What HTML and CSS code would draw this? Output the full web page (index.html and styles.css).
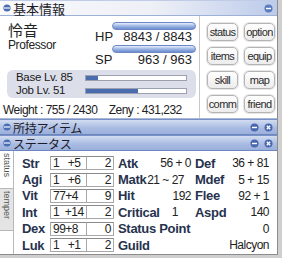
FILE: index.html
```html
<!DOCTYPE html>
<html>

<head>
    <link rel="stylesheet" href="styles.css">
</head>

<body>
    <div class="win">
        <div class="title title-light">
            <svg class="ball" width="8" height="8" viewBox="0 0 8 8"><circle cx="4" cy="4" r="3.6" fill="#4a6cb0"/><rect x="1" y="3.2" width="6" height="1.6" fill="#c8d6f0"/></svg>
            <span class="title-text">基本情報</span>
            <svg class="ctrl" width="9" height="9" viewBox="0 0 9 9"><circle cx="4.5" cy="4.5" r="4" fill="#5a7cc0"/><rect x="2" y="3.8" width="5" height="1.4" fill="#fff"/></svg>
        </div>
        <div class="basic">
            <div class="basic-left">
                <div class="char">
                    <div class="names">
                        <div class="char-name">怜音</div>
                        <div class="char-job">Professor</div>
                    </div>
                    <div class="gauges">
                        <div class="gauge"></div>
                        <div class="gauge-row"><span>HP</span><span>8843 / 8843</span></div>
                        <div class="gauge"></div>
                        <div class="gauge-row"><span>SP</span><span>963 / 963</span></div>
                    </div>
                </div>
                <div class="lv-box">
                    <div class="lv-row"><span class="lv-label">Base Lv. 85</span><div class="exp"><div class="exp-fill" style="width: 12%"></div></div></div>
                    <div class="lv-row"><span class="lv-label">Job Lv. 51</span><div class="exp"><div class="exp-fill" style="width: 52%"></div></div></div>
                </div>
                <div class="weight">Weight : 755 / 2430&nbsp;&nbsp;&nbsp; Zeny : 431,232</div>
            </div>
            <div class="menu">
                <div class="btn">status</div>
                <div class="btn">option</div>
                <div class="btn">items</div>
                <div class="btn">equip</div>
                <div class="btn">skill</div>
                <div class="btn">map</div>
                <div class="btn">comm</div>
                <div class="btn">friend</div>
            </div>
        </div>
        <div class="title title-dark">
            <svg class="ball" width="8" height="8" viewBox="0 0 8 8"><circle cx="4" cy="4" r="3.6" fill="#4a6cb0"/><rect x="1" y="3.2" width="6" height="1.6" fill="#c8d6f0"/></svg>
            <span class="title-text">所持アイテム</span>
            <svg class="ctrl" width="9" height="9" viewBox="0 0 9 9"><circle cx="4.5" cy="4.5" r="4" fill="#4a68b0"/><rect x="2" y="3.8" width="5" height="1.4" fill="#fff"/></svg>
            <svg class="ctrl" width="9" height="9" viewBox="0 0 9 9"><circle cx="4.5" cy="4.5" r="4" fill="#4a68b0"/><path d="M2.8 2.8 L6.2 6.2 M6.2 2.8 L2.8 6.2" stroke="#fff" stroke-width="1.3"/></svg>
        </div>
        <div class="title title-dark">
            <svg class="ball" width="8" height="8" viewBox="0 0 8 8"><circle cx="4" cy="4" r="3.6" fill="#4a6cb0"/><rect x="1" y="3.2" width="6" height="1.6" fill="#c8d6f0"/></svg>
            <span class="title-text">ステータス</span>
            <svg class="ctrl" width="9" height="9" viewBox="0 0 9 9"><circle cx="4.5" cy="4.5" r="4" fill="#4a68b0"/><rect x="2" y="3.8" width="5" height="1.4" fill="#fff"/></svg>
            <svg class="ctrl" width="9" height="9" viewBox="0 0 9 9"><circle cx="4.5" cy="4.5" r="4" fill="#4a68b0"/><path d="M2.8 2.8 L6.2 6.2 M6.2 2.8 L2.8 6.2" stroke="#fff" stroke-width="1.3"/></svg>
        </div>
        <div class="status">
            <div class="tabs">
                <div class="tab tab-on">status</div>
                <div class="tab">temper</div>
            </div>
            <div class="stats">
                <div class="stat-row">
                    <span class="k">Str</span><span class="box box-val">1   +5</span><span class="box box-cost">2</span>
                    <div class="pair"><span class="k">Atk</span><span class="v">56 + 0</span></div>
                    <div class="pair pair-r"><span class="k">Def</span><span class="v">36 + 81</span></div>
                </div>
                <div class="stat-row">
                    <span class="k">Agi</span><span class="box box-val">1   +6</span><span class="box box-cost">2</span>
                    <div class="pair"><span class="k">Matk</span><span class="v v-matk">21 ~ 27</span></div>
                    <div class="pair pair-r"><span class="k">Mdef</span><span class="v">5 + 15</span></div>
                </div>
                <div class="stat-row">
                    <span class="k">Vit</span><span class="box box-val">77+4</span><span class="box box-cost">9</span>
                    <div class="pair"><span class="k">Hit</span><span class="v">192</span></div>
                    <div class="pair pair-r"><span class="k">Flee</span><span class="v">92 + 1</span></div>
                </div>
                <div class="stat-row">
                    <span class="k">Int</span><span class="box box-val">1  +14</span><span class="box box-cost">2</span>
                    <div class="pair"><span class="k">Critical</span><span class="v v-crit">1</span></div>
                    <div class="pair pair-r"><span class="k">Aspd</span><span class="v">140</span></div>
                </div>
                <div class="stat-row">
                    <span class="k">Dex</span><span class="box box-val">99+8</span><span class="box box-cost">0</span>
                    <div class="pair pair-wide"><span class="k">Status Point</span><span class="v">0</span></div>
                </div>
                <div class="stat-row">
                    <span class="k">Luk</span><span class="box box-val">1   +1</span><span class="box box-cost">2</span>
                    <div class="pair pair-wide"><span class="k">Guild</span><span class="v">Halcyon</span></div>
                </div>
            </div>
        </div>
    </div>
</body>

</html>
```

FILE: styles.css
```css
* {
    box-sizing: border-box;
}

html,
body {
    margin: 0;
    padding: 0;
}

body {
    width: 282px;
    height: 258px;
    overflow: hidden;
    background: #cfcfcf;
    font-family: "Liberation Sans", "Noto Sans CJK JP", sans-serif;
    font-size: 12px;
    color: #222;
}

.win {
    width: 278px;
    background: #fff;
    border-right: 1px solid #8c8c8c;
    border-bottom: 1px solid #8c8c8c;
}

/* title bars */

.title {
    height: 16px;
    display: flex;
    align-items: center;
    padding: 0 4px 0 3px;
    gap: 5px;
}

.title-light {
    background: linear-gradient(to right, #fafafc, #eef0f7 55%, #bccbea);
    border-top: 1px solid #c0cce6;
    border-bottom: 1px solid #9db0d6;
}

.title-dark {
    background: linear-gradient(#d2dcf0, #a8bae2 60%, #9cb0dc);
    border-top: 1px solid #7890c8;
    border-bottom: 1px solid #6e86c0;
}

.title-text {
    font-family: "Noto Sans CJK JP", sans-serif;
    font-size: 13px;
    line-height: 15px;
    color: #1c1c28;
    margin-left: -3px;
    flex: 1;
}

.title-dark .title-text {
    font-size: 12px;
    letter-spacing: -0.3px;
}

.ball,
.ctrl {
    flex: none;
}

/* basic info */

.basic {
    height: 103px;
    display: flex;
    border-bottom: 1px solid #aab6d4;
}

.basic-left {
    width: 200px;
    border-right: 1px solid #c8c8c8;
    display: flex;
    flex-direction: column;
}

.char {
    display: flex;
    height: 54px;
    padding-top: 5px;
}

.names {
    width: 95px;
    padding-left: 8px;
}

.char-name {
    font-family: "Noto Sans CJK JP", sans-serif;
    font-size: 15px;
    line-height: 17px;
}

.char-job {
    line-height: 15px;
    letter-spacing: -0.4px;
}

.gauges {
    width: 101px;
    padding-top: 1px;
}

.gauge {
    margin-left: 17px;
    height: 8px;
    border-radius: 4px;
    border: 1px solid #6c88c4;
    background: linear-gradient(#e6eefc, #9eb6e4 50%, #6c8cd0);
}

.gauge-row {
    display: flex;
    justify-content: space-between;
    height: 14px;
    line-height: 14px;
    font-size: 13px;
    padding-right: 4px;
    margin-bottom: 1px;
}

.lv-box {
    margin: 0 3px 0 7px;
    height: 28px;
    border-radius: 6px;
    background: #dcdfea;
    padding: 1px 0 0 9px;
}

.lv-row {
    display: flex;
    align-items: center;
    height: 13px;
}

.lv-label {
    width: 69px;
    font-size: 11.5px;
    line-height: 13px;
    letter-spacing: -0.3px;
    color: #1a1a1a;
}

.exp {
    width: 102px;
    height: 6px;
    background: #fff;
    border: 1px solid #9aa0ae;
}

.exp-fill {
    height: 100%;
    background: #4c6cb0;
}

.weight {
    padding: 5px 0 0 3px;
    line-height: 14px;
    letter-spacing: -0.5px;
    white-space: nowrap;
}

.menu {
    display: grid;
    grid-template-columns: 31px 31px;
    grid-auto-rows: 18px;
    column-gap: 6px;
    row-gap: 6px;
    padding: 7px 0 0 7px;
    align-content: start;
}

.btn {
    border: 1px solid #b4b4b4;
    border-radius: 5px;
    background: linear-gradient(#ffffff, #ececec);
    box-shadow: 0 0 0 1px #e6e6e6;
    font-size: 11px;
    line-height: 16px;
    text-align: center;
    color: #2a2a2a;
    letter-spacing: -0.6px;
    white-space: nowrap;
}

/* status */

.status {
    height: 103px;
    display: flex;
}

.tabs {
    width: 14px;
    display: flex;
    flex-direction: column;
    border-right: 1px solid #b8b8b8;
}

.tab {
    writing-mode: vertical-rl;
    font-size: 9px;
    line-height: 12px;
    color: #555;
    height: 42px;
    padding-top: 2px;
    background: #e4e4e4;
    border-bottom: 1px solid #b8b8b8;
}

.tab-on {
    background: #fff;
    height: 38px;
}

.stats {
    flex: 1;
    padding-top: 4px;
    padding-left: 8px;
}

.stat-row {
    display: flex;
    align-items: center;
    height: 16.4px;
}

.k {
    font-weight: bold;
    font-size: 13px;
    letter-spacing: -0.3px;
    color: #27324e;
    white-space: nowrap;
}

.stat-row > .k {
    width: 28px;
}

.box {
    height: 14px;
    line-height: 12px;
    border: 1px solid #a8a8a8;
    border-top-color: #8a8a8a;
    background: #fff;
    letter-spacing: -0.5px;
    white-space: pre;
}

.box-val {
    width: 37px;
    padding-left: 2px;
}

.box-cost {
    width: 27px;
    text-align: right;
    padding-right: 2px;
    border-left: none;
}

.pair {
    display: flex;
    align-items: center;
    width: 77px;
    margin-left: 4px;
}

.pair-r {
    width: 74px;
    margin-left: 0;
}

.pair-wide {
    width: 151px;
}

.v {
    margin-left: auto;
    letter-spacing: -0.5px;
    white-space: nowrap;
}

.pair .v {
    padding-right: 4px;
}

.pair-r .v,
.pair-wide .v {
    padding-right: 0;
}

.v-matk {
    padding-right: 11px !important;
}

.v-crit {
    padding-right: 17px !important;
}
```
